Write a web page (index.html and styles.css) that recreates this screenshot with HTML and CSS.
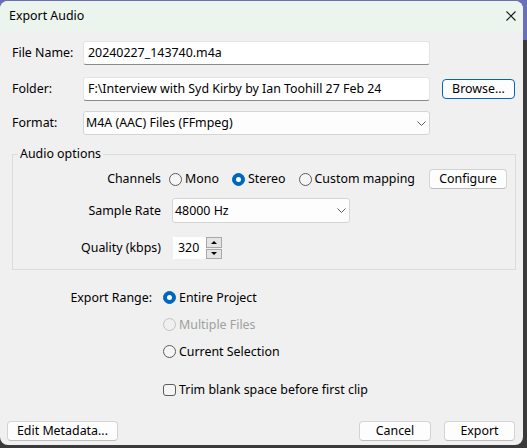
FILE: index.html
```html
<!DOCTYPE html>
<html>
<head>
<meta charset="utf-8">
<link rel="stylesheet" href="styles.css">
</head>
<body>
<div class="window">
  <div class="titlebar">
    <span class="title">Export Audio</span>
    <svg class="close" width="10" height="10" viewBox="0 0 10 10"><path d="M0.5 0.5 L9.5 9.5 M9.5 0.5 L0.5 9.5" stroke="#1a1a1a" stroke-width="1.1" fill="none"/></svg>
  </div>
  <div class="content">
    <div class="field-row">
      <span class="field-label">File Name:</span>
      <div class="textbox">20240227_143740.m4a</div>
    </div>
    <div class="field-row row-folder">
      <span class="field-label">Folder:</span>
      <div class="textbox">F:\Interview with Syd Kirby by Ian Toohill 27 Feb 24</div>
      <button class="btn btn-default btn-browse">Browse...</button>
    </div>
    <div class="field-row row-format">
      <span class="field-label">Format:</span>
      <div class="select select-format"><span>M4A (AAC) Files (FFmpeg)</span><svg class="chev" width="9" height="5" viewBox="0 0 9 5"><path d="M0.5 0.5 L4.5 4.5 L8.5 0.5" stroke="#5a5a5a" stroke-width="1" fill="none"/></svg></div>
    </div>

    <fieldset class="group">
      <legend>Audio options</legend>
      <div class="opt-row row-channels">
        <span class="opt-label">Channels</span>
        <span class="radio-item first"><span class="radio"></span>Mono</span>
        <span class="radio-item"><span class="radio checked"></span>Stereo</span>
        <span class="radio-item"><span class="radio"></span>Custom mapping</span>
        <button class="btn btn-configure">Configure</button>
      </div>
      <div class="opt-row row-rate">
        <span class="opt-label">Sample Rate</span>
        <div class="select select-rate"><span>48000 Hz</span><svg class="chev" width="9" height="5" viewBox="0 0 9 5"><path d="M0.5 0.5 L4.5 4.5 L8.5 0.5" stroke="#5a5a5a" stroke-width="1" fill="none"/></svg></div>
      </div>
      <div class="opt-row row-quality">
        <span class="opt-label">Quality (kbps)</span>
        <div class="spin">
          <div class="spin-value">320</div>
          <div class="spin-btns">
            <span class="spin-btn"><span class="arrow-up"></span></span>
            <span class="spin-btn"><span class="arrow-down"></span></span>
          </div>
        </div>
      </div>
    </fieldset>

    <div class="range">
      <div class="range-label">Export Range:</div>
      <div class="range-options">
        <div class="range-opt"><span class="radio checked"></span>Entire Project</div>
        <div class="range-opt disabled"><span class="radio"></span>Multiple Files</div>
        <div class="range-opt"><span class="radio"></span>Current Selection</div>
        <div class="range-opt check-row"><span class="checkbox"></span>Trim blank space before first clip</div>
      </div>
    </div>
  </div>
  <div class="footer">
    <button class="btn btn-meta">Edit Metadata...</button>
    <button class="btn btn-cancel">Cancel</button>
    <button class="btn btn-export">Export</button>
  </div>
</div>
</body>
</html>
```
FILE: styles.css
```css
html, body {
  margin: 0;
  padding: 0;
}
body {
  width: 527px;
  height: 448px;
  overflow: hidden;
  background: linear-gradient(to bottom, #6a70b6 0, #6a70b6 40px, #3a3a3a 40px, #3a3a3a 100%);
}
.window {
  width: 523px;
  height: 444px;
  margin-top: 1px;
  background: #f0f0f0;
  border-radius: 8px;
  overflow: hidden;
  display: flex;
  flex-direction: column;
  font-family: "Noto Sans", sans-serif;
  font-size: 12.4px;
  line-height: 16px;
  color: #000;
}
.titlebar {
  height: 30px;
  flex: none;
  display: flex;
  align-items: center;
  justify-content: space-between;
  padding: 0 7px 0 9px;
  background: #ebf5ee;
}
.close {
  display: block;
}
.content {
  padding: 10px 7px 0 12px;
}
.field-row {
  display: flex;
  align-items: center;
  height: 24px;
}
.row-folder {
  margin-top: 12px;
}
.row-format {
  margin-top: 10px;
}
.field-label {
  width: 71px;
  flex: none;
}
.textbox {
  box-sizing: border-box;
  width: 347px;
  height: 24px;
  background: #fff;
  border: 1px solid #e4e4e4;
  border-bottom-color: #8a8a8a;
  border-radius: 3px;
  padding: 0 4px;
  display: flex;
  align-items: center;
  white-space: nowrap;
}
.select {
  box-sizing: border-box;
  height: 24px;
  background: #fdfdfd;
  border: 1px solid #d5d5d5;
  border-radius: 3px;
  display: flex;
  align-items: center;
  justify-content: space-between;
  padding: 0 3px 0 2px;
  white-space: nowrap;
}
.chev {
  display: block;
}
.select-format {
  width: 347px;
}
.btn {
  box-sizing: border-box;
  height: 20px;
  padding: 0;
  font: inherit;
  line-height: 16px;
  color: #000;
  background: #fdfdfd;
  border: 1px solid #d3d3d3;
  border-bottom-color: #bdbdbd;
  border-radius: 4px;
  text-align: center;
}
.btn-default {
  border-color: #0067c0;
}
.btn-browse {
  width: 73px;
  margin-left: 12px;
}
.group {
  box-sizing: border-box;
  width: 504px;
  margin: 11px 0 0 0;
  padding: 0 0 10px 0;
  border: 1px solid #dcdcdc;
  min-width: 0;
}
.group legend {
  margin-left: 5px;
  padding: 0 2px;
  line-height: 16px;
}
.opt-row {
  display: flex;
  align-items: center;
}
.row-channels {
  margin-top: 7px;
  height: 20px;
}
.row-rate {
  margin-top: 9px;
  height: 25px;
}
.row-quality {
  margin-top: 14px;
  height: 22px;
}
.opt-label {
  width: 148px;
  flex: none;
  text-align: right;
}
.radio-item {
  display: flex;
  align-items: center;
  margin-left: 13px;
  white-space: nowrap;
}
.radio-item.first {
  margin-left: 8px;
}
.radio {
  box-sizing: border-box;
  width: 13px;
  height: 13px;
  border: 1px solid #5c5c5c;
  border-radius: 50%;
  background: #f5f5f5;
  margin-right: 3px;
  flex: none;
  display: flex;
  align-items: center;
  justify-content: center;
}
.radio.checked {
  background: #0067c0;
  border-color: #0067c0;
}
.radio.checked::after {
  content: "";
  width: 5px;
  height: 5px;
  border-radius: 50%;
  background: #fff;
}
.btn-configure {
  width: 78px;
  margin-left: 14px;
}
.select-rate {
  width: 178px;
  height: 25px;
  margin-left: 11px;
}
.spin {
  display: flex;
  margin-left: 12px;
  height: 22px;
}
.spin-value {
  box-sizing: border-box;
  width: 33px;
  height: 22px;
  background: #fff;
  padding-left: 5px;
  display: flex;
  align-items: center;
}
.spin-btns {
  display: flex;
  flex-direction: column;
  width: 16px;
  height: 22px;
}
.spin-btn {
  box-sizing: border-box;
  flex: 1;
  background: #e4e4e4;
  border: 1px solid #a8a8a8;
  display: flex;
  align-items: center;
  justify-content: center;
}
.spin-btn + .spin-btn {
  border-top: 1px solid #a8a8a8;
  margin-top: 1px;
}
.arrow-up {
  width: 0;
  height: 0;
  border-left: 3px solid transparent;
  border-right: 3px solid transparent;
  border-bottom: 3px solid #000;
}
.arrow-down {
  width: 0;
  height: 0;
  border-left: 3px solid transparent;
  border-right: 3px solid transparent;
  border-top: 3px solid #000;
}
.range {
  display: flex;
  margin-top: 14px;
}
.range-label {
  width: 140px;
  flex: none;
  text-align: right;
  line-height: 27px;
}
.range-options {
  margin-left: 11px;
}
.range-opt {
  height: 27px;
  display: flex;
  align-items: center;
  white-space: nowrap;
}
.range-opt .radio {
  margin-right: 3px;
}
.range-opt.disabled {
  color: #a0a0a0;
}
.range-opt.disabled .radio {
  border-color: #c2c2c2;
  background: #f0f0f0;
}
.check-row {
  margin-top: 11px;
}
.checkbox {
  box-sizing: border-box;
  width: 13px;
  height: 12px;
  border: 1px solid #5c5c5c;
  border-radius: 3px;
  background: #f5f5f5;
  margin-right: 3px;
  flex: none;
}
.footer {
  margin-top: auto;
  display: flex;
  padding: 0 8px 4px 7px;
}
.btn-meta {
  width: 111px;
}
.btn-cancel {
  width: 72px;
  margin-left: auto;
}
.btn-export {
  width: 71px;
  margin-left: 13px;
}
```
